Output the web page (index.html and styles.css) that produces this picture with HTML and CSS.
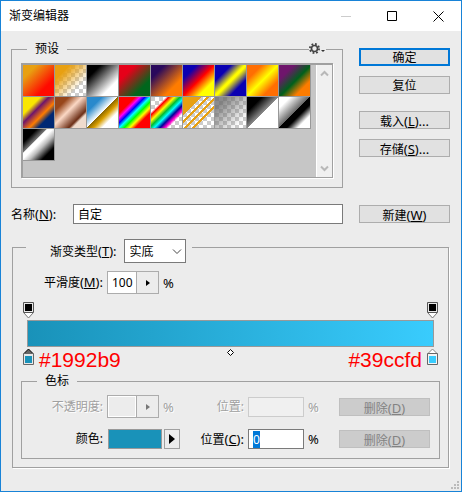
FILE: index.html
```html
<!DOCTYPE html>
<html lang="zh-CN">
<head>
    <meta charset="UTF-8">
    <meta name="viewport" content="width=device-width, initial-scale=1.0">
    <title>渐变编辑器</title>
    <link rel="stylesheet" href="styles.css">
</head>
<body>
    <div class="dialog">
        <header class="titlebar">
            <h1 class="title">渐变编辑器</h1>
            <button class="win-btn win-min" type="button" aria-label="最小化" disabled>
                <svg width="11" height="11"><path d="M0 5.5h10" /></svg>
            </button>
            <button class="win-btn" type="button" aria-label="最大化">
                <svg width="11" height="11"><path d="M.5 .5h9v9h-9z" /></svg>
            </button>
            <button class="win-btn" type="button" aria-label="关闭">
                <svg width="11" height="11"><path d="M.5 .5l10 10M10.5 .5l-10 10" /></svg>
            </button>
        </header>

        <main class="content">
            <!-- Presets -->
            <div class="top">
                <fieldset class="group presets">
                    <legend>预设</legend>
                    <button class="gear" type="button" aria-label="预设菜单">
                        <svg width="17" height="12" viewBox="0 0 17 12">
                            <circle cx="5.5" cy="5.5" r="3" fill="none" stroke="#444" stroke-width="1.6" />
                            <circle cx="5.5" cy="5.5" r="4.6" fill="none" stroke="#444" stroke-width="1.8" stroke-dasharray="1.8 1.81" />
                            <path d="M12 7h4l-2 2z" fill="#333" />
                        </svg>
                    </button>
                    <div class="preset-box">
                        <div class="preset-list">
                            <button type="button" class="swatch sw-orange-red"></button>
                            <button type="button" class="swatch sw-orange-clear"></button>
                            <button type="button" class="swatch sw-black-white"></button>
                            <button type="button" class="swatch sw-red-green"></button>
                            <button type="button" class="swatch sw-violet-orange"></button>
                            <button type="button" class="swatch sw-blue-red-yellow"></button>
                            <button type="button" class="swatch sw-blue-yellow-blue"></button>
                            <button type="button" class="swatch sw-orange-yellow-orange"></button>
                            <button type="button" class="swatch sw-violet-green-orange"></button>
                            <button type="button" class="swatch sw-yellow-violet-blue"></button>
                            <button type="button" class="swatch sw-copper"></button>
                            <button type="button" class="swatch sw-chrome"></button>
                            <button type="button" class="swatch sw-spectrum"></button>
                            <button type="button" class="swatch sw-rainbow"></button>
                            <button type="button" class="swatch sw-stripes"></button>
                            <button type="button" class="swatch sw-neutral"></button>
                            <button type="button" class="swatch sw-black-cut"></button>
                            <button type="button" class="swatch sw-white-cut"></button>
                            <button type="button" class="swatch sw-silver"></button>
                        </div>
                        <div class="scrollbar">
                            <svg width="9" height="7"><path d="M1 5.5l3.5-3.5 3.5 3.5" /></svg>
                            <svg width="9" height="7"><path d="M1 1.5l3.5 3.5 3.5-3.5" /></svg>
                        </div>
                    </div>
                </fieldset>
                <div class="actions">
                    <button class="btn btn-default" type="button">确定</button>
                    <button class="btn" type="button">复位</button>
                    <button class="btn btn-spaced" type="button">载入<span class="key">(<u>L</u>)...</span></button>
                    <button class="btn" type="button">存储<span class="key">(<u>S</u>)...</span></button>
                </div>
            </div>

            <!-- Name -->
            <div class="name-row">
                <label class="name-label" for="name">名称<span class="key">(<u>N</u>):</span></label>
                <input class="field name-field" id="name" type="text" value="自定">
                <button class="btn" type="button">新建<span class="key">(<u>W</u>)</span></button>
            </div>

            <!-- Gradient -->
            <fieldset class="group gradient">
                <legend class="type-legend">
                    <label for="type">渐变类型<span class="key">(<u>T</u>):</span></label>
                    <span class="select-wrap">
                        <select class="select" id="type">
                            <option>实底</option>
                            <option>杂色</option>
                        </select>
                        <svg class="chevron" width="10" height="6"><path d="M1 .5l4 4 4-4" /></svg>
                    </span>
                </legend>

                <div class="smooth-row">
                    <label class="smooth-label" for="smooth">平滑度<span class="key">(<u>M</u>):</span></label>
                    <span class="combo">
                        <input class="combo-input" id="smooth" type="text" value="100">
                        <button class="combo-btn" type="button" aria-label="平滑度滑块"><svg width="4" height="6"><path d="M0 0v6l4-3z" /></svg></button>
                    </span>
                    <span class="key">%</span>
                </div>

                <div class="ramp">
                    <div class="ramp-top">
                        <svg class="stop" width="11" height="17"><path d="M1 11l4.500 5 4.500-5" fill="#fff" stroke="#777" /><path d="M.5 .5h10v10h-10z" fill="#e8e8e8" stroke="#555" /><path d="M2 2h7v7h-7z" fill="#000" /></svg>
                        <svg class="stop" width="11" height="17"><path d="M1 11l4.500 5 4.500-5" fill="#fff" stroke="#777" /><path d="M.5 .5h10v10h-10z" fill="#e8e8e8" stroke="#555" /><path d="M2 2h7v7h-7z" fill="#000" /></svg>
                    </div>
                    <div class="ramp-bar"></div>
                    <div class="ramp-bottom">
                        <div class="ramp-side">
                            <svg class="stop" width="11" height="17"><path d="M1 5.500l4.500-4.500 4.500 4.500z" fill="#666" stroke="#000" /><path d="M.5 5.500h10v11h-10z" fill="#e8e8e8" stroke="#666" /><path d="M2 8h7v7h-7z" fill="#1992b9" /></svg>
                            <span class="hex">#1992b9</span>
                        </div>
                        <svg class="midpoint" width="7" height="7"><path d="M3.500 .5l3 3-3 3-3-3z" fill="#fff" stroke="#000" /></svg>
                        <div class="ramp-side ramp-side-end">
                            <span class="hex">#39ccfd</span>
                            <svg class="stop" width="11" height="17"><path d="M1 5.500l4.500-4.500 4.500 4.500z" fill="#fff" stroke="#888" /><path d="M.5 5.500h10v11h-10z" fill="#f4f4f4" stroke="#666" /><path d="M2 8h7v7h-7z" fill="#39ccfd" /></svg>
                        </div>
                    </div>
                </div>

                <fieldset class="group stops">
                    <legend>色标</legend>
                    <div class="stops-row is-disabled">
                        <label class="stops-label" for="opacity">不透明度:</label>
                        <span class="with-unit">
                            <span class="combo">
                                <input class="combo-input" id="opacity" type="text" disabled>
                                <button class="combo-btn" type="button" aria-label="不透明度滑块" disabled><svg width="4" height="6"><path d="M0 0v6l4-3z" /></svg></button>
                            </span>
                            <span class="key">%</span>
                        </span>
                        <label class="stops-label" for="opacity-pos">位置:</label>
                        <span class="with-unit">
                            <input class="field pos-field" id="opacity-pos" type="text" disabled>
                            <span class="key">%</span>
                        </span>
                        <button class="btn" type="button" disabled>删除<span class="key">(<u>D</u>)</span></button>
                    </div>
                    <div class="stops-row">
                        <label class="stops-label" for="color">颜色:</label>
                        <span class="color-pick">
                            <button class="color-well" id="color" type="button"></button>
                            <button class="color-arrow" type="button" aria-label="颜色菜单"><svg width="6" height="10"><path d="M0 0v10l6-5z" /></svg></button>
                        </span>
                        <label class="stops-label" for="color-pos">位置<span class="key">(<u>C</u>):</span></label>
                        <span class="with-unit">
                            <input class="field pos-field" id="color-pos" type="text" value="0">
                            <span class="key">%</span>
                        </span>
                        <button class="btn" type="button" disabled>删除<span class="key">(<u>D</u>)</span></button>
                    </div>
                </fieldset>
            </fieldset>
        </main>

        <svg class="grip" width="8" height="8"><path d="M6 0h2v2h-2zM3 3h2v2h-2zM6 3h2v2h-2zM0 6h2v2h-2zM3 6h2v2h-2zM6 6h2v2h-2z" /></svg>
    </div>

    <script>
        // the position field opens with its value selected
        document.getElementById('color-pos').select();
    </script>
</body>
</html>
```

FILE: styles.css
```css
* {
    box-sizing: border-box;
}
body {
    margin: 0;
    background: #ececec;
    color: #000;
    font-family: "Noto Sans", "Noto Sans CJK SC", sans-serif;
    font-size: 12px;
    line-height: 16px;
}
button, input, select {
    margin: 0;
    padding: 0;
    border: 0;
    border-radius: 0;
    color: inherit;
    font: inherit;
    outline: none;
}
svg {
    display: block;
}
::selection {
    background: #0078d7;
    color: #fff;
}
.key {
    font-size: 13px;
}
.dialog {
    position: relative;
    min-height: 100vh;
    border: 1px solid #1883d7;
}

/* Title bar */
.titlebar {
    display: flex;
    height: 30px;
    padding-left: 8px;
    background: #fff;
}
.title {
    flex: 1;
    margin: 0;
    font-size: 12px;
    font-weight: normal;
    line-height: 30px;
}
.win-btn {
    display: flex;
    align-items: center;
    justify-content: center;
    width: 46px;
    background: none;
}
.win-btn path {
    fill: none;
    stroke: #000;
}
.win-min path {
    stroke: #ccc;
}

.content {
    padding: 10px 11px 23px 10px;
}

/* Groups */
.group {
    min-width: 0;
    margin: 0;
    border: 1px solid #a0a0a0;
}
.group > legend {
    height: 16px;
    margin-left: 15px;
    padding: 0 8px;
}

/* Buttons and fields */
.btn {
    width: 91px;
    height: 18px;
    padding-top: 2px;
    border: 1px solid #adadad;
    background: #e1e1e1;
    line-height: 14px;
    white-space: nowrap;
}
.btn:disabled {
    border-color: #bfbfbf;
    background: #ccc;
    color: #838383;
}
.btn-default {
    border: 2px solid #0078d7;
    line-height: 12px;
}
.field {
    height: 20px;
    padding: 0 4px;
    border: 1px solid #7a7a7a;
    background: #fff;
}
.field:disabled {
    border-color: #ccc;
    background: #f0f0f0;
}

/* Presets */
.top {
    display: flex;
    gap: 16px;
}
.presets {
    position: relative;
    flex: 1;
    padding: 6px 9px 9px;
}
.presets > legend {
    margin-left: 6px;
}
.gear {
    position: absolute;
    top: -14px;
    right: 16px;
    background: #ececec;
}
.preset-box {
    display: flex;
    height: 115px;
    border: 1px solid #a0a0a0;
    border-width: 2px 1px 1px 2px;
    background: #c6c6c6;
    box-shadow: 1px 1px #fff;
}
.preset-list {
    display: flex;
    flex: 1;
    flex-wrap: wrap;
    align-content: flex-start;
}
.scrollbar {
    display: flex;
    flex-direction: column;
    align-items: center;
    justify-content: space-between;
    width: 16px;
    padding: 5px 0;
    border-left: 1px solid #fff;
    background: #f0f0f0;
}
.scrollbar path {
    fill: none;
    stroke: #b8b8b8;
    stroke-width: 2;
}
.swatch {
    width: 32px;
    height: 32px;
    border: solid #999;
    border-width: 0 1px 1px 0;
    background-origin: padding-box;
}
.sw-orange-red {
    background-image: linear-gradient(135deg, #e8a011 22%, #ff0a00 72%);
}
.sw-orange-clear {
    background: linear-gradient(135deg, #e8a011 24%, rgba(232, 130, 60, 0) 74%), conic-gradient(#fff 25%, #ccc 0 50%, #fff 0 75%, #ccc 0) 0 0 / 8px 8px;
}
.sw-black-white {
    background-image: linear-gradient(135deg, #000 22%, #fff 74%);
}
.sw-red-green {
    background-image: linear-gradient(135deg, #e60019 26%, #00661c 74%);
}
.sw-violet-orange {
    background-image: linear-gradient(135deg, #29095c 22%, #ff7c00 72%);
}
.sw-blue-red-yellow {
    background-image: linear-gradient(135deg, #0a00b2 22%, #f00 50%, #ff0 75%);
}
.sw-blue-yellow-blue {
    background-image: linear-gradient(135deg, #0a00b2 26%, #fffc00 48%, #fffc00 52%, #0a00b2 74%);
}
.sw-orange-yellow-orange {
    background-image: linear-gradient(135deg, #ff6e02 24%, #ff0 50%, #ff6e02 76%);
}
.sw-violet-green-orange {
    background-image: linear-gradient(135deg, #6f156c 24%, #00601b 52%, #fd7c00 76%);
}
.sw-yellow-violet-blue {
    background-image: linear-gradient(135deg, #f9e600 28%, #6f156c 42%, #fd7c00 60%, #002874 74%);
}
.sw-copper {
    background-image: linear-gradient(135deg, #97461a 22%, #fbd8c5 44%, #6c2e16 72%, #efdbcd 78%);
}
.sw-chrome {
    background-image: linear-gradient(135deg, #2989cc 24%, #fff 49%, #906a00 50%, #d99f00 60%, #fff 74%);
}
.sw-spectrum {
    background-image: linear-gradient(135deg, #f00 26%, #f0f 34%, #00f 42%, #0ff 50%, #0f0 58%, #ff0 67%, #f00 76%);
}
.sw-rainbow {
    background: linear-gradient(135deg, transparent 24%, #f00 29%, #ff0 38%, #0b3 47%, #0ff 55%, #009 64%, #f0c 72%, transparent 78%), conic-gradient(#fff 25%, #ccc 0 50%, #fff 0 75%, #ccc 0) 0 0 / 8px 8px;
}
.sw-stripes {
    background: linear-gradient(135deg, #e8a011 30%, transparent 30% 38%, #e8a011 38% 43%, transparent 43% 50%, #e8a011 50% 56%, transparent 56% 63%, #e8a011 63% 69%, transparent 69%), conic-gradient(#fff 25%, #ccc 0 50%, #fff 0 75%, #ccc 0) 0 0 / 8px 8px;
}
.sw-neutral {
    background: linear-gradient(135deg, rgba(110, 110, 110, .8) 20%, transparent 84%), conic-gradient(#fff 25%, #ccc 0 50%, #fff 0 75%, #ccc 0) 0 0 / 8px 8px;
}
.sw-black-cut {
    background-image: linear-gradient(135deg, #000 24%, #888 50%, #fff 51%);
}
.sw-white-cut {
    background-image: linear-gradient(135deg, #fff 18%, #666 49%, #000 50%, #000 62%, #fff 80%);
}
.sw-silver {
    background-image: linear-gradient(135deg, #000 22%, #777 38%, #fff 39%, #fff 48%, #bbb 60%, #000 80%);
}

.actions {
    display: flex;
    flex-direction: column;
    gap: 10px;
    padding-top: 7px;
}
.btn-spaced {
    margin-top: 7px;
}

/* Name */
.name-row {
    display: flex;
    align-items: center;
    margin: 16px 0 15px;
}
.name-label {
    width: 62px;
}
.name-field {
    flex: 1;
    min-width: 0;
    margin-right: 16px;
}

/* Gradient */
.gradient {
    margin: 0 1px;
    padding: 15px 8px 8px;
    box-shadow: 1px 1px #fff;
}
.gradient > .type-legend {
    display: flex;
    align-items: flex-start;
    gap: 7px;
    height: 17px;
    margin-left: 5px;
    padding: 0 6px 0 24px;
    line-height: 24px;
}
.select-wrap {
    position: relative;
}
.select {
    display: block;
    width: 62px;
    height: 24px;
    padding-left: 5px;
    border: 1px solid #7a7a7a;
    background: #fff;
    appearance: none;
}
.chevron {
    position: absolute;
    top: 10px;
    right: 4px;
    pointer-events: none;
}
.chevron path {
    fill: none;
    stroke: #444;
}
.smooth-row, .with-unit {
    display: flex;
    align-items: center;
    gap: 4px;
}
.smooth-label {
    width: 82px;
    text-align: right;
}
.combo {
    display: flex;
    width: 52px;
    height: 23px;
    border: 1px solid #acacac;
}
.combo-input {
    flex: 1;
    min-width: 0;
    padding-left: 4px;
    background: #fff;
}
.combo-btn {
    display: flex;
    align-items: center;
    justify-content: center;
    width: 22px;
    border-left: 1px solid #acacac;
    background: #ececec;
}
.combo-input:disabled {
    border: 1px solid #fff;
    background: #ececec;
}
.combo-btn:disabled {
    fill: #777;
}

/* Ramp with its opacity and colour stops */
.ramp {
    margin: 8px 2px 0;
}
.ramp-top {
    display: flex;
    justify-content: space-between;
    height: 18px;
}
.ramp-bar {
    height: 27px;
    margin: 0 4px;
    border: 1px solid #999;
    background: linear-gradient(90deg, #1992b9, #39ccfd);
}
.ramp-bottom {
    display: grid;
    grid-template-columns: 1fr auto 1fr;
    height: 26px;
    padding-top: 1px;
}
.ramp-side {
    display: flex;
    gap: 5px;
}
.ramp-side-end {
    justify-content: flex-end;
}
.midpoint {
    margin-top: 1px;
}
.hex {
    color: #f00;
    font-family: "Liberation Sans", Arial, sans-serif;
    font-size: 21px;
    line-height: 24px;
}

/* Stops */
.stops {
    display: grid;
    gap: 10px;
    padding: 6px 9px 8px 0;
}
.stops-row {
    display: grid;
    grid-template-columns: 81px 73px 1fr 87px 91px;
    align-items: center;
    column-gap: 4px;
}
.stops-label {
    text-align: right;
    white-space: nowrap;
}
.is-disabled {
    color: #a0a0a0;
    text-shadow: 1px 1px #fff;
}
.is-disabled .btn {
    text-shadow: none;
}
.pos-field {
    width: 56px;
}
.color-pick {
    display: flex;
    gap: 2px;
    height: 22px;
    padding: 1px 0 1px 1px;
}
.color-well {
    flex: 1;
    border: 1px solid #999;
    background: #1992b9;
}
.color-arrow {
    display: flex;
    align-items: center;
    justify-content: center;
    width: 16px;
    border: 1px solid #a0a0a0;
    background: #ececec;
}

.grip {
    position: absolute;
    right: 2px;
    bottom: 2px;
    fill: #bbb;
}
```
